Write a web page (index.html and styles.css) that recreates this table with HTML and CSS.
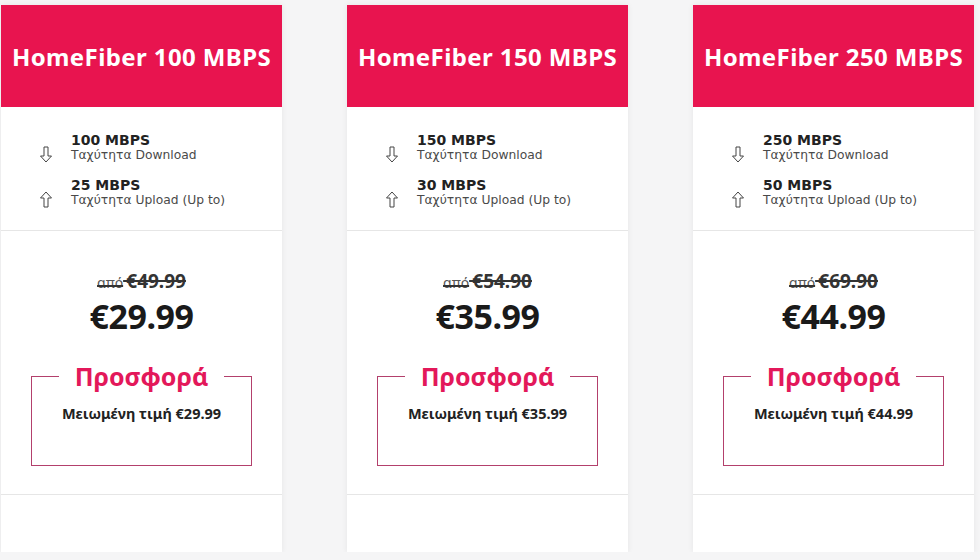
FILE: index.html
```html
<!DOCTYPE html>
<html lang="el">
<head>
    <meta charset="UTF-8">
    <meta name="viewport" content="width=device-width, initial-scale=1.0">
    <title>HomeFiber</title>
    <link rel="stylesheet" href="styles.css">
</head>
<body>

    <div class="plans">

        <!-- Plan 100 -->
        <div class="plan">
            <div class="plan-header">
                <h2>HomeFiber 100 MBPS</h2>
            </div>
            <div class="speeds">
                <div class="speed">
                    <svg class="arrow" viewBox="0 0 14 17"><path d="M5 1H9V10H12.5L7 16L1.5 10H5Z"/></svg>
                    <div>
                        <strong>100 MBPS</strong>
                        <span>Ταχύτητα Download</span>
                    </div>
                </div>
                <div class="speed">
                    <svg class="arrow" viewBox="0 0 14 17"><path d="M5 16H9V7H12.5L7 1L1.5 7H5Z"/></svg>
                    <div>
                        <strong>25 MBPS</strong>
                        <span>Ταχύτητα Upload (Up to)</span>
                    </div>
                </div>
            </div>
            <div class="pricing">
                <p class="old-price"><span class="from">από</span>&thinsp;€49.99</p>
                <p class="price">€29.99</p>
                <fieldset class="offer">
                    <legend>Προσφορά</legend>
                    <p>Μειωμένη τιμή €29.99</p>
                </fieldset>
            </div>
            <div class="plan-footer"></div>
        </div>

        <!-- Plan 150 -->
        <div class="plan">
            <div class="plan-header">
                <h2>HomeFiber 150 MBPS</h2>
            </div>
            <div class="speeds">
                <div class="speed">
                    <svg class="arrow" viewBox="0 0 14 17"><path d="M5 1H9V10H12.5L7 16L1.5 10H5Z"/></svg>
                    <div>
                        <strong>150 MBPS</strong>
                        <span>Ταχύτητα Download</span>
                    </div>
                </div>
                <div class="speed">
                    <svg class="arrow" viewBox="0 0 14 17"><path d="M5 16H9V7H12.5L7 1L1.5 7H5Z"/></svg>
                    <div>
                        <strong>30 MBPS</strong>
                        <span>Ταχύτητα Upload (Up to)</span>
                    </div>
                </div>
            </div>
            <div class="pricing">
                <p class="old-price"><span class="from">από</span>&thinsp;€54.90</p>
                <p class="price">€35.99</p>
                <fieldset class="offer">
                    <legend>Προσφορά</legend>
                    <p>Μειωμένη τιμή €35.99</p>
                </fieldset>
            </div>
            <div class="plan-footer"></div>
        </div>

        <!-- Plan 250 -->
        <div class="plan">
            <div class="plan-header">
                <h2>HomeFiber 250 MBPS</h2>
            </div>
            <div class="speeds">
                <div class="speed">
                    <svg class="arrow" viewBox="0 0 14 17"><path d="M5 1H9V10H12.5L7 16L1.5 10H5Z"/></svg>
                    <div>
                        <strong>250 MBPS</strong>
                        <span>Ταχύτητα Download</span>
                    </div>
                </div>
                <div class="speed">
                    <svg class="arrow" viewBox="0 0 14 17"><path d="M5 16H9V7H12.5L7 1L1.5 7H5Z"/></svg>
                    <div>
                        <strong>50 MBPS</strong>
                        <span>Ταχύτητα Upload (Up to)</span>
                    </div>
                </div>
            </div>
            <div class="pricing">
                <p class="old-price"><span class="from">από</span>&thinsp;€69.90</p>
                <p class="price">€44.99</p>
                <fieldset class="offer">
                    <legend>Προσφορά</legend>
                    <p>Μειωμένη τιμή €44.99</p>
                </fieldset>
            </div>
            <div class="plan-footer"></div>
        </div>

    </div>

</body>
</html>
```

FILE: styles.css
```css
* {
    margin: 0;
    padding: 0;
    box-sizing: border-box;
}

body {
    font-family: 'Noto Sans', 'DejaVu Sans', sans-serif;
    background-color: #f5f5f6;
    color: #222;
}

.plans {
    display: flex;
    gap: 65px;
    padding: 5px 0 0 1px;
}

.plan {
    width: 281px;
    height: 547px;
    background-color: white;
    box-shadow: 0 0 6px rgba(0, 0, 0, 0.07);
    display: flex;
    flex-direction: column;
}

.plan-header {
    height: 102px;
    background-color: #e8144f;
    color: white;
    display: flex;
    align-items: center;
    justify-content: center;
}

.plan-header h2 {
    font-size: 24px;
    font-weight: 700;
    letter-spacing: 0.4px;
}

.speeds {
    height: 124px;
    padding: 25px 0 0 38px;
    border-bottom: 1px solid #e6e6e6;
    display: flex;
    flex-direction: column;
    gap: 14px;
    font-family: 'DejaVu Sans', sans-serif;
}

.speed {
    display: flex;
    align-items: flex-end;
    gap: 18px;
}

.speed strong {
    display: block;
    font-size: 14px;
    line-height: 16px;
    font-weight: 700;
    color: #222;
}

.speed span {
    display: block;
    font-size: 12.3px;
    line-height: 15px;
    color: #4a4a4a;
}

.arrow {
    width: 14px;
    height: 17px;
    fill: none;
    stroke: #444;
    stroke-width: 1;
}

.pricing {
    height: 264px;
    padding-top: 38px;
    border-bottom: 1px solid #e6e6e6;
    text-align: center;
}

.old-price {
    font-size: 19px;
    line-height: 24px;
    font-weight: 700;
    color: #333;
    text-decoration: line-through;
    text-decoration-thickness: 1.5px;
}

.old-price .from {
    font-size: 14px;
    font-weight: 400;
    color: #555;
}

.price {
    font-size: 34px;
    line-height: 42px;
    font-weight: 700;
    color: #1a1a1a;
    letter-spacing: -0.5px;
}

.offer {
    margin: 25px 30px 0 30px;
    height: 104px;
    border: 1px solid #b3406c;
    padding: 0 10px;
}

.offer legend {
    margin: 0 auto;
    padding: 0 16px;
    font-size: 25px;
    line-height: 28px;
    font-weight: 700;
    color: #e3185a;
}

.offer p {
    margin-top: 13px;
    font-size: 14.5px;
    font-weight: 700;
    color: #222;
}

.plan-footer {
    flex: 1;
}
```
